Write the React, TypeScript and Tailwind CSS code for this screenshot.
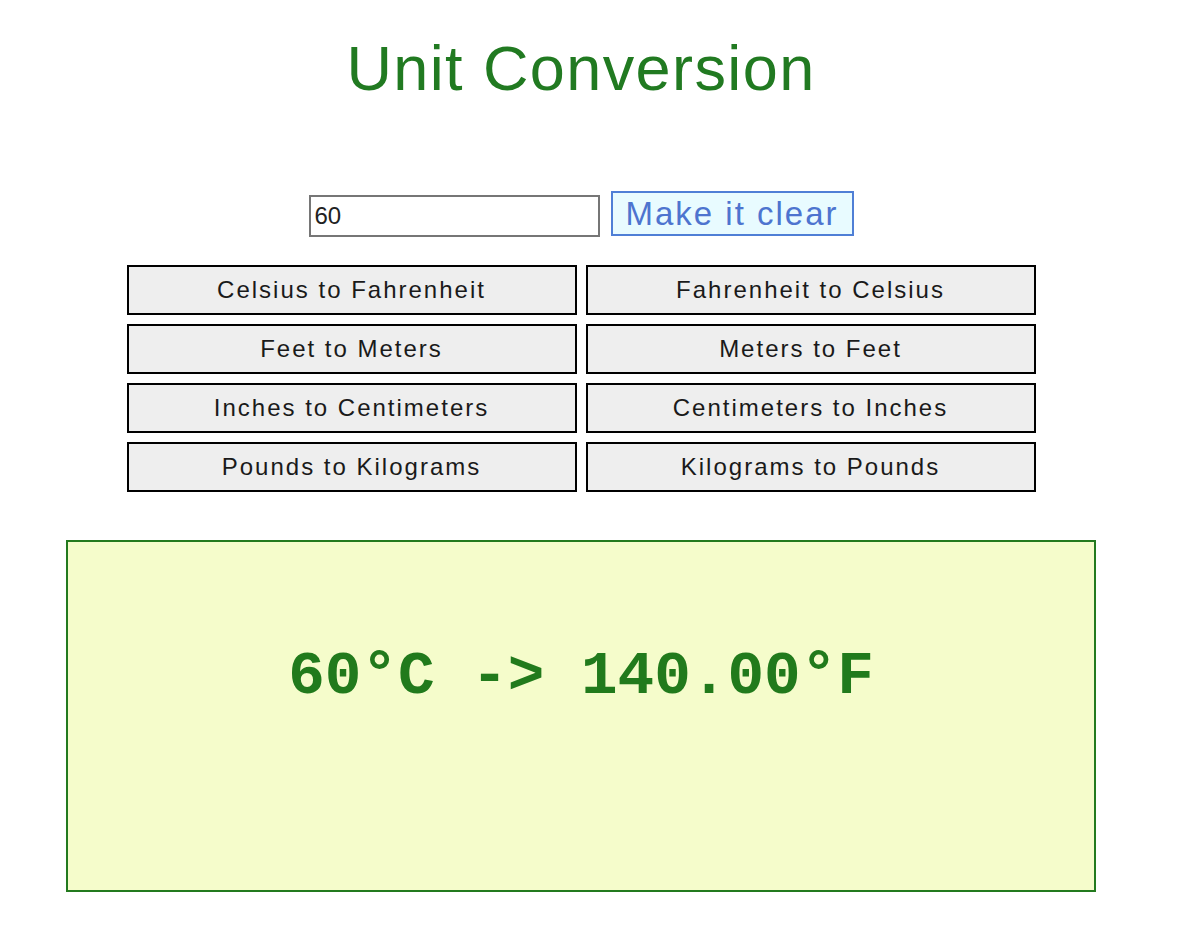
import { useState } from 'react';

const conversions: [string, (v: number) => string][] = [
  ['Celsius to Fahrenheit', (v) => `${v}°C -> ${((v * 9) / 5 + 32).toFixed(2)}°F`],
  ['Fahrenheit to Celsius', (v) => `${v}°F -> ${(((v - 32) * 5) / 9).toFixed(2)}°C`],
  ['Feet to Meters', (v) => `${v}ft -> ${(v * 0.3048).toFixed(2)}m`],
  ['Meters to Feet', (v) => `${v}m -> ${(v / 0.3048).toFixed(2)}ft`],
  ['Inches to Centimeters', (v) => `${v}in -> ${(v * 2.54).toFixed(2)}cm`],
  ['Centimeters to Inches', (v) => `${v}cm -> ${(v / 2.54).toFixed(2)}in`],
  ['Pounds to Kilograms', (v) => `${v}lb -> ${(v * 0.453592).toFixed(2)}kg`],
  ['Kilograms to Pounds', (v) => `${v}kg -> ${(v / 0.453592).toFixed(2)}lb`],
];

export default function App() {
  const [value, setValue] = useState('60');
  const [result, setResult] = useState('60°C -> 140.00°F');

  return (
    <div className="w-[1162px] min-h-[930px] bg-white font-['Liberation_Sans',Arial,sans-serif] flex flex-col items-center">
      <h1 className="mt-[21px] text-[63px] leading-[94px] tracking-[1.4px] text-[#217a21]">Unit Conversion</h1>

      {/* input + clear */}
      <div className="mt-[76px] flex items-start gap-[11px]">
        <input
          value={value}
          onChange={(e) => setValue(e.target.value)}
          className="mt-[4px] w-[291px] h-[42px] border-2 border-[#767676] px-[4px] text-[24px] text-[#222] outline-none"
        />
        <button
          onClick={() => {
            setValue('');
            setResult('');
          }}
          className="h-[45px] w-[243px] border-2 border-[#4f7fd6] bg-[#e8fbff] text-[33px] leading-none tracking-[2px] text-[#4d74cf]"
        >
          Make it clear
        </button>
      </div>

      {/* conversion buttons */}
      <div className="mt-[28px] grid grid-cols-[450px_450px] gap-x-[9px] gap-y-[9px]">
        {conversions.map(([label, fn]) => (
          <button
            key={label}
            onClick={() => setResult(fn(parseFloat(value) || 0))}
            className="h-[50px] border-2 border-black bg-[#eeeeee] text-[24px] tracking-[2px] text-[#1a1a1a]"
          >
            {label}
          </button>
        ))}
      </div>

      {/* result */}
      <div className="mt-[48px] w-[1030px] h-[352px] border-2 border-[#237a1e] bg-[#f5fccb] flex justify-center pt-[100px]">
        <div className="font-['Liberation_Mono','Courier_New',monospace] font-bold text-[61px] leading-[69px] text-[#217a1c] whitespace-pre">
          {result}
        </div>
      </div>
    </div>
  );
}
